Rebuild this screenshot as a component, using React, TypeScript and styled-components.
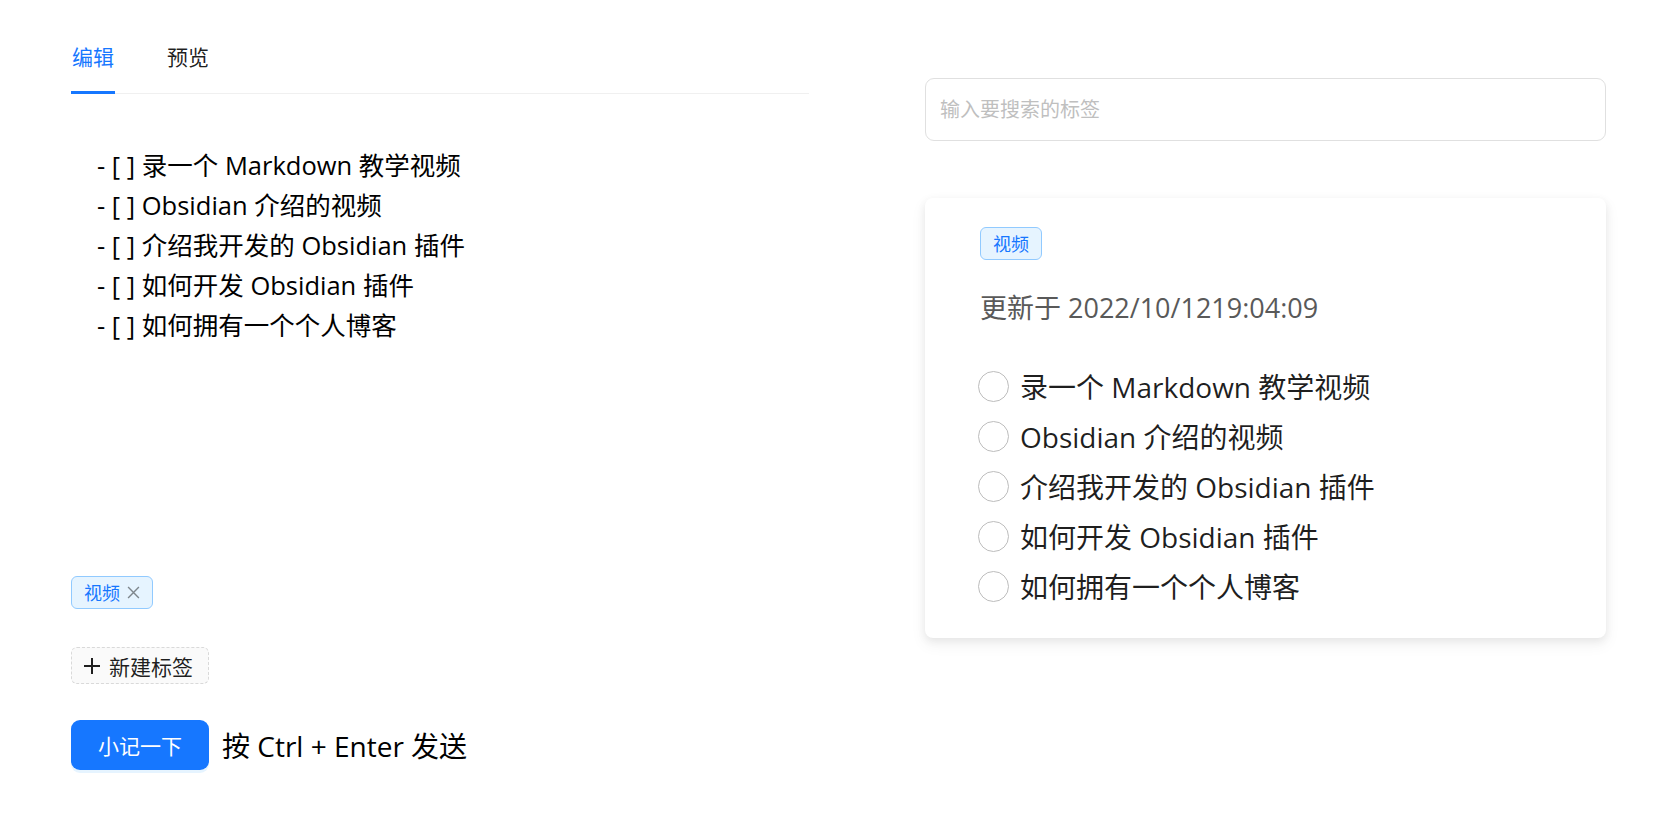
import React from "react";
import styled, { createGlobalStyle } from "styled-components";

const GlobalStyle = createGlobalStyle`
  html, body {
    margin: 0;
    padding: 0;
    background: #ffffff;
  }
  body {
    font-family: "Open Sans", "Noto Sans CJK SC", sans-serif;
    color: rgba(0, 0, 0, 0.88);
  }
  * { box-sizing: border-box; }
`;

const Page = styled.div`
  display: flex;
  align-items: flex-start;
  padding: 24px 0 0 71px;
  min-height: 835px;
`;

const LeftColumn = styled.div`
  width: 738px;
  display: flex;
  flex-direction: column;
  align-items: flex-start;
`;

const TabBar = styled.div`
  align-self: stretch;
  display: flex;
  gap: 51px;
  border-bottom: 1px solid #f0f0f0;
`;

const Tab = styled.div<{ $active?: boolean }>`
  position: relative;
  padding: 18px 1px 21px;
  font-size: 21px;
  line-height: 30px;
  color: ${(p) => (p.$active ? "#1677ff" : "rgba(0,0,0,0.88)")};
  cursor: pointer;
  &::after {
    content: "";
    position: absolute;
    left: 0;
    right: 0;
    bottom: -1px;
    height: 3px;
    background: ${(p) => (p.$active ? "#1677ff" : "transparent")};
  }
`;

const Editor = styled.div`
  align-self: stretch;
  min-height: 482px;
  padding: 51px 0 0 26px;
  font-size: 25.5px;
  line-height: 40px;
  color: #000;
`;

const EditorLine = styled.div`
  white-space: pre;
`;

const Tag = styled.span`
  display: inline-flex;
  align-items: center;
  height: 33px;
  padding: 0 12px;
  border: 1px solid #91caff;
  background: #e6f4ff;
  color: #1677ff;
  border-radius: 6px;
  font-size: 18px;
  line-height: 1;
`;

const CloseIcon = styled.svg`
  margin-left: 7px;
  width: 13px;
  height: 13px;
  color: rgba(0, 0, 0, 0.45);
`;

const NewTagButton = styled.div`
  margin-top: 38px;
  display: inline-flex;
  align-items: center;
  gap: 8px;
  width: 138px;
  height: 37px;
  padding: 0 11px;
  border: 1px dashed #d9d9d9;
  border-radius: 6px;
  background: #fafafa;
  font-size: 21px;
  color: rgba(0, 0, 0, 0.88);
`;

const PlusIcon = styled.svg`
  width: 18px;
  height: 18px;
  color: rgba(0, 0, 0, 0.88);
`;

const SubmitRow = styled.div`
  margin-top: 36px;
  display: flex;
  align-items: center;
  gap: 13px;
`;

const PrimaryButton = styled.button`
  width: 138px;
  height: 50px;
  border: none;
  border-radius: 9px;
  background: #1677ff;
  color: #ffffff;
  font-family: "Open Sans", "Noto Sans CJK SC", sans-serif;
  font-size: 21px;
  box-shadow: 0 3px 0 rgba(5, 145, 255, 0.1);
  cursor: pointer;
`;

const Hint = styled.span`
  font-size: 28px;
  color: #000;
`;

const RightColumn = styled.div`
  width: 681px;
  margin-left: 116px;
  margin-top: 54px;
  display: flex;
  flex-direction: column;
`;

const SearchInput = styled.input`
  height: 63px;
  padding: 0 14px;
  border: 1px solid #e0e0e0;
  border-radius: 9px;
  font-family: "Open Sans", "Noto Sans CJK SC", sans-serif;
  font-size: 20px;
  color: rgba(0, 0, 0, 0.88);
  outline: none;
  &::placeholder {
    color: #bfbfbf;
  }
`;

const Card = styled.div`
  margin-top: 57px;
  height: 440px;
  padding: 29px 0 0 55px;
  background: #ffffff;
  border-radius: 8px;
  box-shadow: 0 1px 2px -2px rgba(0, 0, 0, 0.12), 0 3px 8px 0 rgba(0, 0, 0, 0.07),
    0 6px 14px 3px rgba(0, 0, 0, 0.04);
  display: flex;
  flex-direction: column;
  align-items: flex-start;
`;

const Meta = styled.div`
  margin-top: 28px;
  font-size: 27px;
  line-height: 40px;
  color: #595959;
`;

const TodoList = styled.div`
  margin-top: 33px;
  display: flex;
  flex-direction: column;
`;

const TodoItem = styled.div`
  display: flex;
  align-items: center;
  gap: 11px;
  height: 50px;
  font-size: 28px;
  color: rgba(0, 0, 0, 0.88);
  white-space: pre;
`;

const Circle = styled.span`
  width: 31px;
  height: 31px;
  margin-left: -2px;
  border: 1.5px solid #bdbdbd;
  border-radius: 50%;
  flex-shrink: 0;
`;

const items = [
  "录一个 Markdown 教学视频",
  "Obsidian 介绍的视频",
  "介绍我开发的 Obsidian 插件",
  "如何开发 Obsidian 插件",
  "如何拥有一个个人博客",
];

export default function App() {
  return (
    <>
      <GlobalStyle />
      <Page>
        <LeftColumn>
          <TabBar>
            <Tab $active>编辑</Tab>
            <Tab>预览</Tab>
          </TabBar>
          <Editor>
            {items.map((t) => (
              <EditorLine key={t}>{`- [ ] ${t}`}</EditorLine>
            ))}
          </Editor>
          <Tag>
            视频
            <CloseIcon viewBox="0 0 12 12" fill="none">
              <path d="M1 1 L11 11 M11 1 L1 11" stroke="currentColor" strokeWidth="1.3" />
            </CloseIcon>
          </Tag>
          <NewTagButton>
            <PlusIcon viewBox="0 0 18 18" fill="none">
              <path d="M9 1 V17 M1 9 H17" stroke="currentColor" strokeWidth="2" />
            </PlusIcon>
            新建标签
          </NewTagButton>
          <SubmitRow>
            <PrimaryButton>小记一下</PrimaryButton>
            <Hint>按 Ctrl + Enter 发送</Hint>
          </SubmitRow>
        </LeftColumn>
        <RightColumn>
          <SearchInput placeholder="输入要搜索的标签" />
          <Card>
            <Tag>视频</Tag>
            <Meta>更新于 2022/10/1219:04:09</Meta>
            <TodoList>
              {items.map((t) => (
                <TodoItem key={t}>
                  <Circle />
                  {t}
                </TodoItem>
              ))}
            </TodoList>
          </Card>
        </RightColumn>
      </Page>
    </>
  );
}
